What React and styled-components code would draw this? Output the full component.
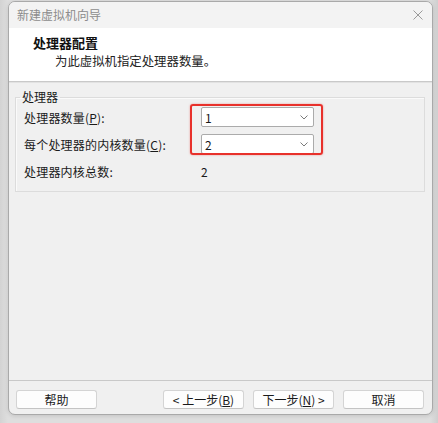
import React from "react";
import styled, { createGlobalStyle } from "styled-components";

const GlobalStyle = createGlobalStyle`
  html, body {
    margin: 0;
    padding: 0;
    background: #d8d8d8;
  }
  body {
    font-family: "Noto Sans CJK SC", "Noto Sans", sans-serif;
    font-size: 12px;
    color: #1a1a1a;
  }
`;

const Page = styled.div`
  width: 438px;
  height: 423px;
  padding: 1px 0 0 8px;
  box-sizing: border-box;
  background: linear-gradient(90deg, #d3d3d3 0, #dedede 8px, #dedede 430px, #cfcfcf 438px);
`;

const Dialog = styled.div`
  width: 425px;
  height: 414px;
  box-sizing: border-box;
  display: flex;
  flex-direction: column;
  background: #f0f0f0;
  border: 1px solid #a9a9a9;
  border-radius: 7px;
  overflow: hidden;
  box-shadow: 0 1px 4px rgba(0, 0, 0, 0.12);
`;

const TitleBar = styled.div`
  height: 26px;
  display: flex;
  align-items: center;
  justify-content: space-between;
  padding: 0 9px 0 8px;
  background: #f3f3f3;
`;

const TitleText = styled.span`
  color: #8c8c8c;
  font-size: 12px;
  line-height: 16px;
`;

const CloseIcon = () => (
  <svg width="10" height="10" viewBox="0 0 10 10">
    <path d="M0.5 0.5 L9.5 9.5 M9.5 0.5 L0.5 9.5" stroke="#9a9a9a" strokeWidth="1" fill="none" />
  </svg>
);

const Header = styled.div`
  height: 54px;
  box-sizing: border-box;
  padding: 6px 0 0 24px;
  background: #ffffff;
  border-bottom: 1px solid #c9c9c9;
  box-shadow: 0 1px 0 #e2e2e2;
`;

const HeaderTitle = styled.div`
  font-size: 13px;
  font-weight: 700;
  line-height: 17px;
  color: #111;
`;

const HeaderSub = styled.div`
  margin: 2px 0 0 22px;
  font-size: 12.4px;
  line-height: 17px;
  color: #222;
`;

const Body = styled.div`
  flex: 1;
  padding: 7px 7px 0 6px;
`;

const Group = styled.fieldset`
  margin: 0;
  padding: 0 8px 10px 8px;
  border: 1px solid #dcdcdc;
  box-shadow: 1px 1px 0 #fafafa inset;
`;

const Legend = styled.legend`
  margin-left: -4px;
  padding: 0 2px;
  font-size: 12px;
  line-height: 16px;
`;

const Rows = styled.div`
  position: relative;
  display: grid;
  grid-template-columns: 176px 114px;
  grid-auto-rows: 20px;
  row-gap: 7px;
  margin-top: 2px;
`;

const Label = styled.div`
  display: flex;
  align-items: center;
  font-size: 12px;
  letter-spacing: 0.2px;
`;

const Value = styled.div`
  display: flex;
  align-items: center;
  padding-left: 1px;
  font-size: 12px;
`;

const Select = styled.div`
  display: flex;
  align-items: center;
  justify-content: space-between;
  box-sizing: border-box;
  margin-left: 1px;
  padding: 0 5px 0 3px;
  background: #ffffff;
  border: 1px solid #ababab;
  border-radius: 2px;
  font-size: 12px;
`;

const Chevron = () => (
  <svg width="8" height="5" viewBox="0 0 8 5">
    <path d="M0.5 0.5 L4 4 L7.5 0.5" stroke="#7a7a7a" strokeWidth="1" fill="none" />
  </svg>
);

const Highlight = styled.div`
  position: absolute;
  left: 166px;
  top: -3px;
  width: 133px;
  height: 51px;
  box-sizing: border-box;
  border: 2px solid #e8312b;
  border-radius: 3px;
  box-shadow: 0 0 2px rgba(232, 49, 43, 0.5);
  pointer-events: none;
`;

const Footer = styled.div`
  display: flex;
  align-items: flex-start;
  gap: 9px;
  padding: 9px 8px 5px 7px;
  border-top: 1px solid #c9c9c9;
`;

const Button = styled.div`
  width: 81px;
  height: 19px;
  box-sizing: border-box;
  display: flex;
  align-items: center;
  justify-content: center;
  background: #fdfdfd;
  border: 1px solid #d4d4d4;
  border-bottom-color: #c4c4c4;
  border-radius: 3px;
  font-size: 12px;
  color: #1a1a1a;
  margin-left: ${(p) => (p.$push ? "auto" : "0")};
`;

const rows = [
  { label: "处理器数量", key: "P", value: "1" },
  { label: "每个处理器的内核数量", key: "C", value: "2" },
];

export default function App() {
  return (
    <>
      <GlobalStyle />
      <Page>
        <Dialog>
          <TitleBar>
            <TitleText>新建虚拟机向导</TitleText>
            <CloseIcon />
          </TitleBar>
          <Header>
            <HeaderTitle>处理器配置</HeaderTitle>
            <HeaderSub>为此虚拟机指定处理器数量。</HeaderSub>
          </Header>
          <Body>
            <Group>
              <Legend>处理器</Legend>
              <Rows>
                {rows.map((r) => (
                  <React.Fragment key={r.key}>
                    <Label>
                      {r.label}(<u>{r.key}</u>):
                    </Label>
                    <Select>
                      <span>{r.value}</span>
                      <Chevron />
                    </Select>
                  </React.Fragment>
                ))}
                <Label>处理器内核总数:</Label>
                <Value>2</Value>
                <Highlight />
              </Rows>
            </Group>
          </Body>
          <Footer>
            <Button>帮助</Button>
            <Button $push>
              &lt; 上一步(<u>B</u>)
            </Button>
            <Button>
              下一步(<u>N</u>) &gt;
            </Button>
            <Button>取消</Button>
          </Footer>
        </Dialog>
      </Page>
    </>
  );
}
